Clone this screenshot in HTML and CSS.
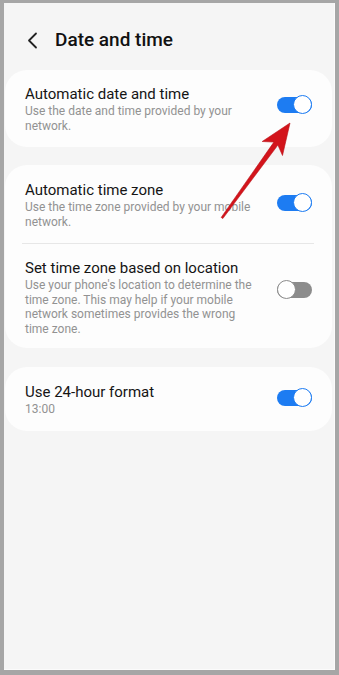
FILE: index.html
```html
<!DOCTYPE html>
<html>
<head>
<meta charset="utf-8">
<link rel="stylesheet" href="styles.css">
</head>
<body>
<div class="screen">
  <div class="header">
    <svg class="back" width="11" height="17" viewBox="0 0 11 17"><path d="M9 1.5 L2 8.5 L9 15.5" fill="none" stroke="#222" stroke-width="1.8" stroke-linecap="round" stroke-linejoin="round"/></svg>
    <div class="title">Date and time</div>
  </div>

  <div class="card card1">
    <div class="row">
      <div class="text">
        <div class="name">Automatic date and time</div>
        <div class="desc">Use the date and time provided by your network.</div>
      </div>
      <span class="toggle on r1"><span class="knob"></span></span>
    </div>
  </div>

  <div class="card card2">
    <div class="row">
      <div class="text">
        <div class="name">Automatic time zone</div>
        <div class="desc">Use the time zone provided by your mobile network.</div>
      </div>
      <span class="toggle on r2"><span class="knob"></span></span>
    </div>
    <div class="divider"></div>
    <div class="row">
      <div class="text">
        <div class="name">Set time zone based on location</div>
        <div class="desc">Use your phone's location to determine the time zone. This may help if your mobile network sometimes provides the wrong time zone.</div>
      </div>
      <span class="toggle off r3"><span class="knob"></span></span>
    </div>
  </div>

  <div class="card card3">
    <div class="row">
      <div class="text">
        <div class="name">Use 24-hour format</div>
        <div class="desc">13:00</div>
      </div>
      <span class="toggle on r4"><span class="knob"></span></span>
    </div>
  </div>

  <svg class="arrow" width="339" height="675" viewBox="0 0 339 675">
    <polygon points="290,123 282.5,155.5 277.9,145.1 222.8,218.6 221.2,217.4 273.9,142.1 262.2,141.5" fill="#d3141b" stroke="#b80f15" stroke-width="0.6" stroke-linejoin="round"/>
  </svg>
</div>
</body>
</html>
```

FILE: styles.css
```css
html, body {
  margin: 0;
  padding: 0;
}
body {
  background: #a6a6a6;
  width: 339px;
  height: 675px;
  overflow: hidden;
  font-family: Roboto, "Noto Sans", sans-serif;
}
.screen {
  margin: 3px 4px 0 4px;
  height: 667px;
  background: #f5f5f5;
  padding: 0 2px 0 1px;
  box-sizing: border-box;
  border-bottom: 1px solid #fbfbfb;
  border-right: 1px solid #fbfbfb;
}
.header {
  height: 67px;
  box-sizing: border-box;
  padding: 25px 0 0 22px;
  display: flex;
  align-items: flex-start;
  gap: 17px;
}
.back {
  display: block;
  margin-top: 4px;
}
.title {
  font-size: 19px;
  line-height: 24px;
  font-weight: 500;
  color: #111;
}
.card {
  background: #fdfdfd;
  border-radius: 22px;
  padding: 0 20px 0 20px;
}
.card1 {
  padding-top: 14px;
  padding-bottom: 14px;
}
.card2 {
  margin-top: 18px;
  padding-top: 15px;
  padding-bottom: 12px;
}
.card3 {
  margin-top: 19px;
  padding-top: 15px;
  padding-bottom: 14px;
}
.row {
  display: flex;
  align-items: center;
  justify-content: space-between;
}
.text {
  width: 232px;
}
.name {
  font-size: 15px;
  line-height: 20px;
  color: #151515;
}
.desc {
  font-size: 12px;
  line-height: 14.5px;
  color: #929292;
}
.divider {
  height: 1px;
  background: #e7e7e7;
  margin: 14px -2px 14px -3px;
}
.toggle {
  position: relative;
  width: 35px;
  height: 19px;
  flex: none;
}
.toggle::before {
  content: "";
  position: absolute;
  left: 0;
  right: 0;
  top: 1.5px;
  bottom: 1.5px;
  border-radius: 8px;
}
.toggle.on::before {
  background: #1d7cf2;
}
.toggle.off::before {
  background: #8c8c8c;
}
.knob {
  position: absolute;
  top: 0;
  width: 19px;
  height: 19px;
  box-sizing: border-box;
  border-radius: 50%;
  background: #fff;
}
.toggle.on .knob {
  right: 0;
  border: 1.5px solid #1d7cf2;
}
.toggle.off .knob {
  left: 0;
  border: 1.5px solid #8c8c8c;
}
.r1 { margin-bottom: 8px; }
.r2 { margin-bottom: 4px; }
.r3 { margin-bottom: 15px; }
.r4 { margin-bottom: 3px; }
.arrow {
  position: absolute;
  left: 0;
  top: 0;
  pointer-events: none;
}
```
